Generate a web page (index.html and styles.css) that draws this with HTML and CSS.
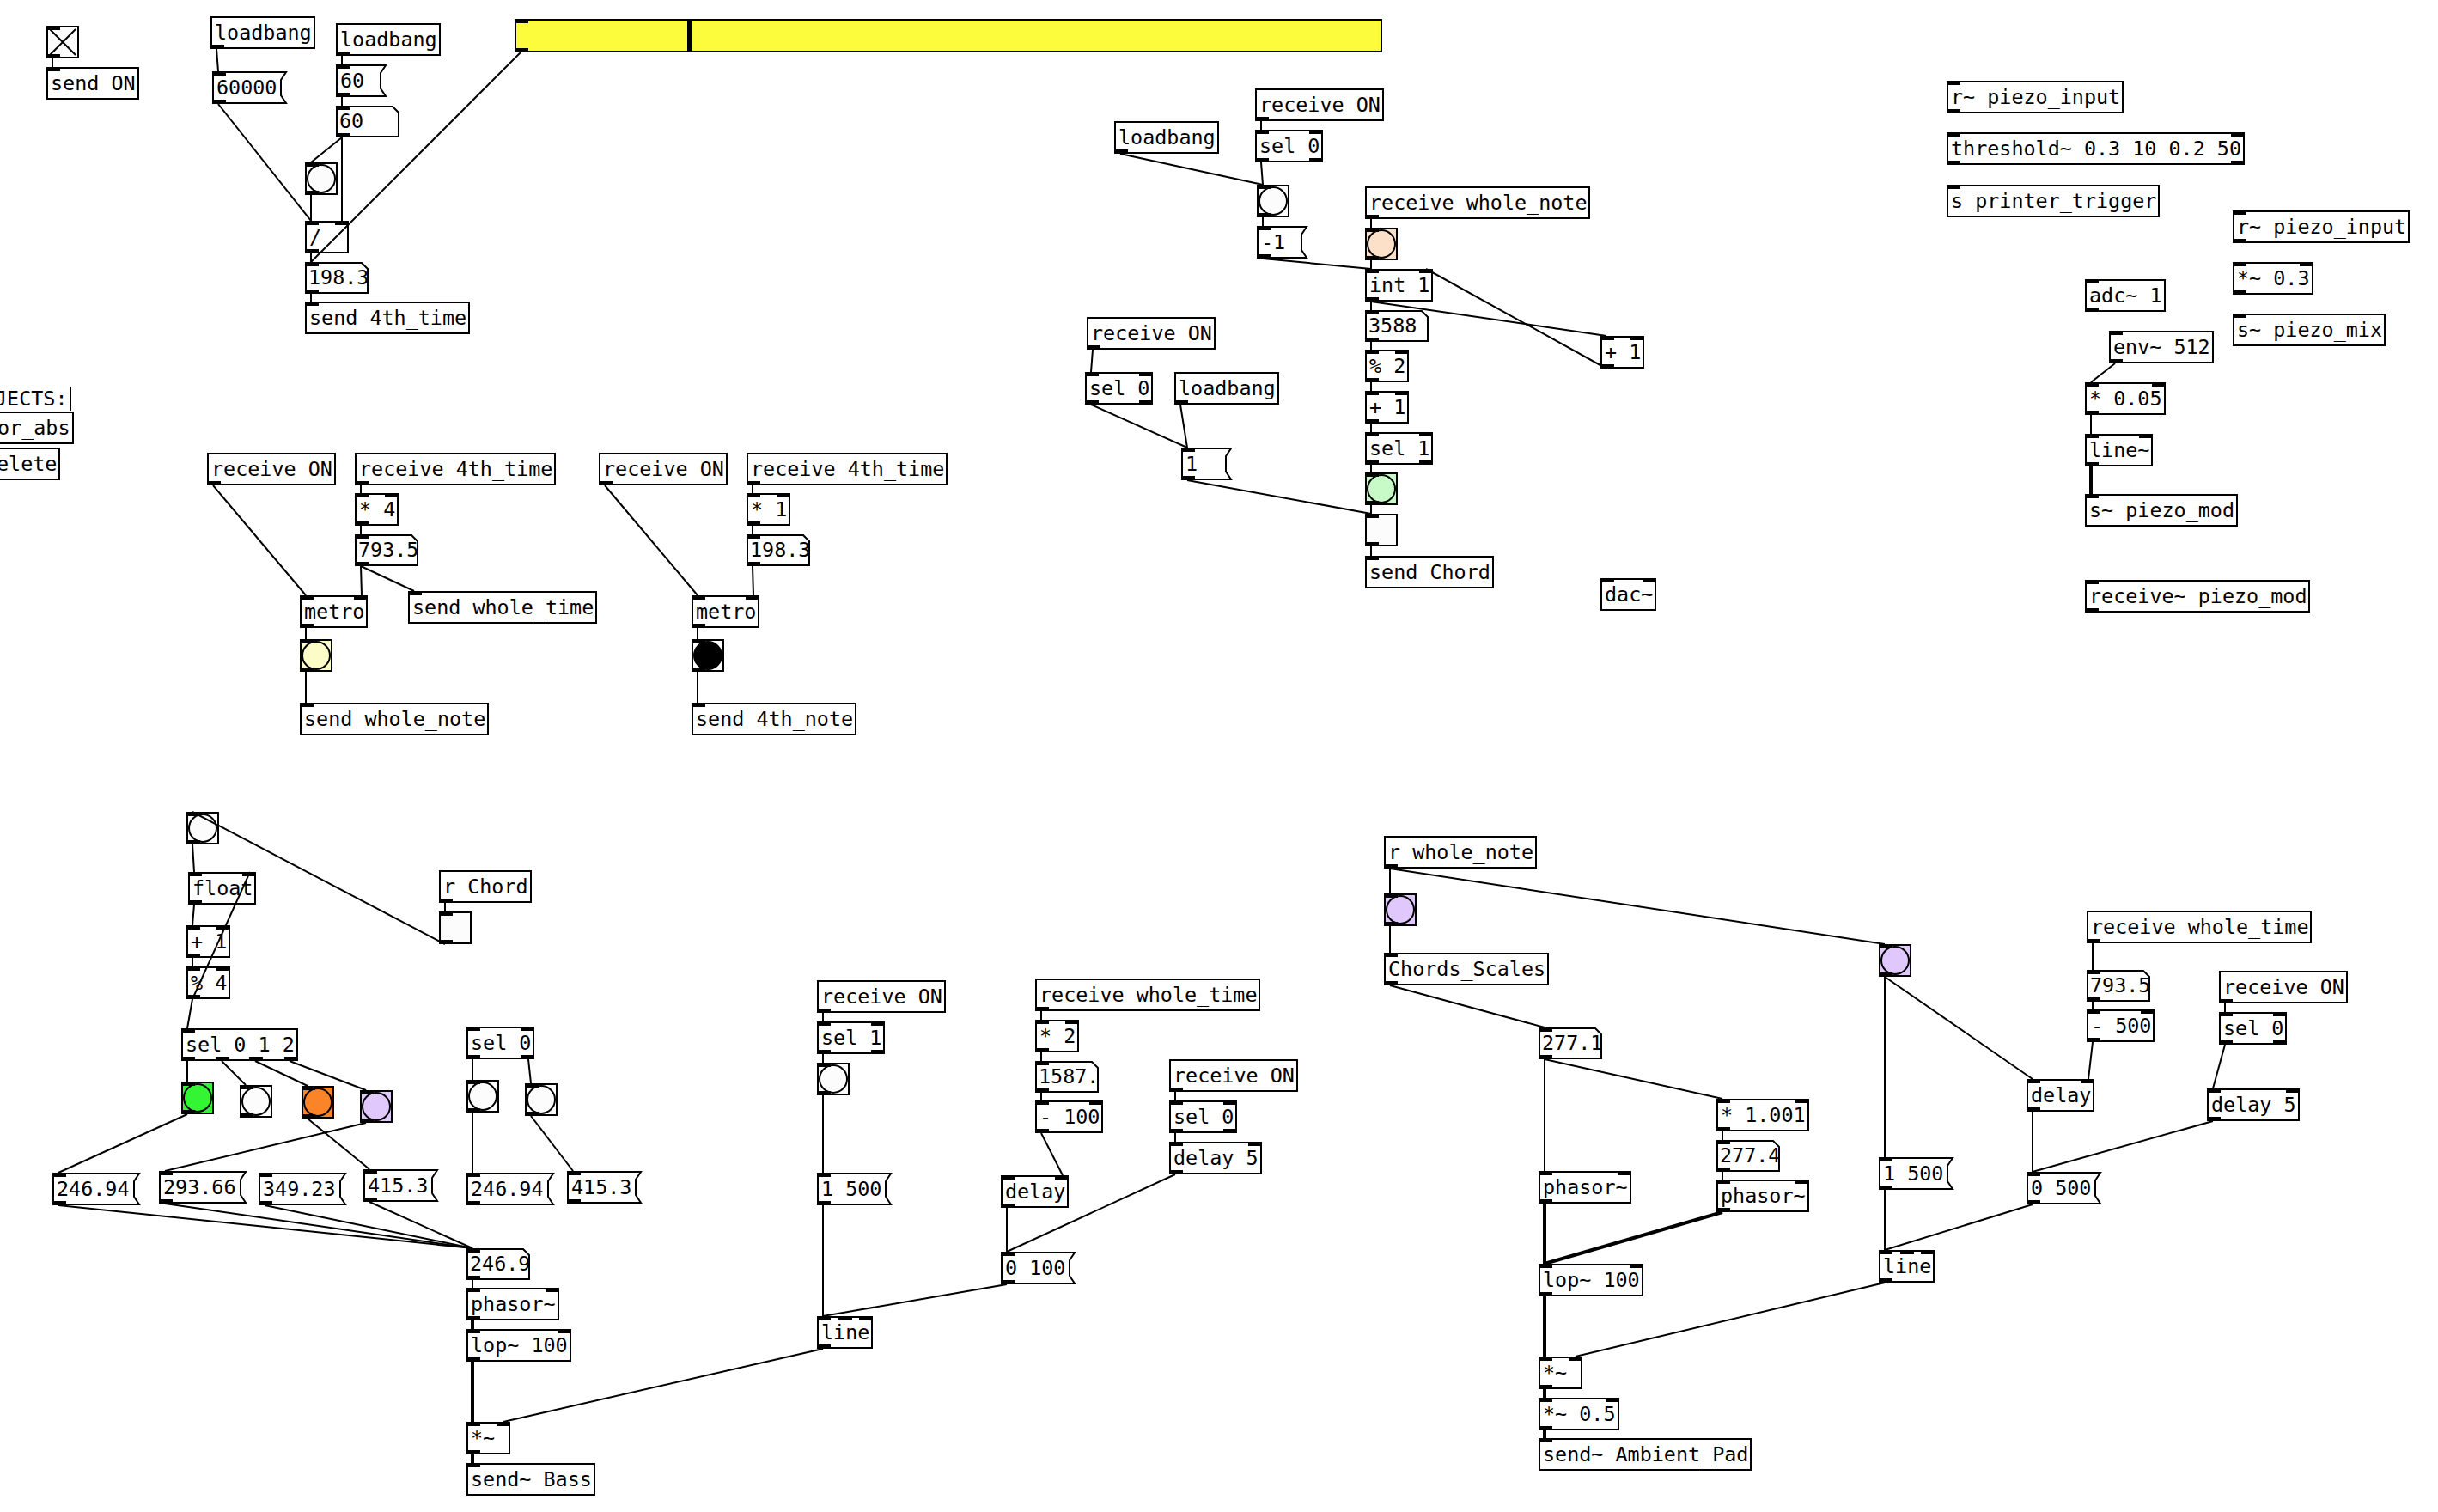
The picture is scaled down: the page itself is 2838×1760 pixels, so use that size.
FILE: index.html
```html
<!DOCTYPE html>
<html>
<head>
<meta charset="utf-8">
<title>Pd patch</title>
<link rel="stylesheet" href="styles.css">
</head>
<body>
<div class="canvas">

<!-- group A -->
<div class="t" style="left:54px;top:30px"><svg viewBox="0 0 34 34"><path d="M2 2L32 32M32 2L2 32"/></svg><i class="il"></i><i class="ol"></i></div>
<div class="o" style="left:54px;top:78px">send ON<i class="il"></i></div>
<div class="o" style="left:245px;top:19px">loadbang<i class="ol"></i></div>
<div class="o m" style="left:247px;top:83px">60000<svg class="f" viewBox="0 0 9 38"><polyline points="0,1 7,1 1,10 1,28 7,37 0,37"/></svg><i class="il"></i><i class="ol"></i></div>
<div class="o" style="left:391px;top:27px">loadbang<i class="ol"></i></div>
<div class="o m" style="left:391px;top:75px">60<svg class="f" viewBox="0 0 9 38"><polyline points="0,1 7,1 1,10 1,28 7,37 0,37"/></svg><i class="il"></i><i class="ol"></i></div>
<div class="n" style="left:391px;top:123px">60<svg viewBox="0 0 74 37"><polygon points="1,1 66,1 73,8 73,36 1,36"/></svg><i class="il"></i><i class="ol"></i></div>
<div class="b cw" style="left:355px;top:189px"><span class="c"></span><i class="il"></i><i class="ol"></i></div>
<div class="o" style="left:355px;top:257px">/<i class="il"></i><i class="ir"></i><i class="ol"></i></div>
<div class="n" style="left:355px;top:305px">198.3<svg viewBox="0 0 74 37"><polygon points="1,1 66,1 73,8 73,36 1,36"/></svg><i class="il"></i><i class="ol"></i></div>
<div class="o" style="left:355px;top:351px">send 4th_time<i class="il"></i></div>
<div class="hs" style="left:599px;top:22px;width:1010px"><span class="k" style="left:199px"></span><i class="il"></i><i class="ol"></i></div>

<div class="cm" style="left:-6px;top:450px">JECTS:</div>
<div class="o" style="left:-8px;top:479px">or_abs</div>
<div class="o" style="left:-9px;top:521px">elete</div>

<!-- group B -->
<div class="o" style="left:241px;top:527px">receive ON<i class="ol"></i></div>
<div class="o" style="left:413px;top:527px">receive 4th_time<i class="ol"></i></div>
<div class="o" style="left:413px;top:574px">* 4<i class="il"></i><i class="ir"></i><i class="ol"></i></div>
<div class="n" style="left:413px;top:622px">793.5<svg viewBox="0 0 74 37"><polygon points="1,1 66,1 73,8 73,36 1,36"/></svg><i class="il"></i><i class="ol"></i></div>
<div class="o" style="left:349px;top:693px">metro<i class="il"></i><i class="ir"></i><i class="ol"></i></div>
<div class="o" style="left:475px;top:688px">send whole_time<i class="il"></i></div>
<div class="b cy" style="left:349px;top:744px"><span class="c"></span><i class="il"></i><i class="ol"></i></div>
<div class="o" style="left:349px;top:818px">send whole_note<i class="il"></i></div>

<!-- group C -->
<div class="o" style="left:697px;top:527px">receive ON<i class="ol"></i></div>
<div class="o" style="left:869px;top:527px">receive 4th_time<i class="ol"></i></div>
<div class="o" style="left:869px;top:574px">* 1<i class="il"></i><i class="ir"></i><i class="ol"></i></div>
<div class="n" style="left:869px;top:622px">198.3<svg viewBox="0 0 74 37"><polygon points="1,1 66,1 73,8 73,36 1,36"/></svg><i class="il"></i><i class="ol"></i></div>
<div class="o" style="left:805px;top:693px">metro<i class="il"></i><i class="ir"></i><i class="ol"></i></div>
<div class="b cw" style="left:805px;top:744px"><span class="c on"></span><i class="il"></i><i class="ol"></i></div>
<div class="o" style="left:805px;top:818px">send 4th_note<i class="il"></i></div>

<!-- group D -->
<div class="o" style="left:1297px;top:141px">loadbang<i class="ol"></i></div>
<div class="o" style="left:1461px;top:103px">receive ON<i class="ol"></i></div>
<div class="o" style="left:1461px;top:151px">sel 0<i class="il"></i><i class="ir"></i><i class="ol"></i><i class="or"></i></div>
<div class="b cw" style="left:1463px;top:215px"><span class="c"></span><i class="il"></i><i class="ol"></i></div>
<div class="o m" style="left:1463px;top:263px">-1<svg class="f" viewBox="0 0 9 38"><polyline points="0,1 7,1 1,10 1,28 7,37 0,37"/></svg><i class="il"></i><i class="ol"></i></div>
<div class="o" style="left:1589px;top:217px">receive whole_note<i class="ol"></i></div>
<div class="b cp" style="left:1589px;top:265px"><span class="c"></span><i class="il"></i><i class="ol"></i></div>
<div class="o" style="left:1589px;top:313px">int 1<i class="il"></i><i class="ir"></i><i class="ol"></i></div>
<div class="n" style="left:1589px;top:361px">3588<svg viewBox="0 0 74 37"><polygon points="1,1 66,1 73,8 73,36 1,36"/></svg><i class="il"></i><i class="ol"></i></div>
<div class="o" style="left:1589px;top:407px">% 2<i class="il"></i><i class="ir"></i><i class="ol"></i></div>
<div class="o" style="left:1589px;top:455px">+ 1<i class="il"></i><i class="ir"></i><i class="ol"></i></div>
<div class="o" style="left:1589px;top:503px">sel 1<i class="il"></i><i class="ir"></i><i class="ol"></i><i class="or"></i></div>
<div class="b cg" style="left:1589px;top:550px"><span class="c"></span><i class="il"></i><i class="ol"></i></div>
<div class="t" style="left:1589px;top:598px"><i class="il"></i><i class="ol"></i></div>
<div class="o" style="left:1589px;top:647px">send Chord<i class="il"></i></div>
<div class="o" style="left:1863px;top:391px">+ 1<i class="il"></i><i class="ir"></i><i class="ol"></i></div>
<div class="o" style="left:1265px;top:369px">receive ON<i class="ol"></i></div>
<div class="o" style="left:1263px;top:433px">sel 0<i class="il"></i><i class="ir"></i><i class="ol"></i><i class="or"></i></div>
<div class="o" style="left:1367px;top:433px">loadbang<i class="ol"></i></div>
<div class="o m" style="left:1375px;top:521px">1<svg class="f" viewBox="0 0 9 38"><polyline points="0,1 7,1 1,10 1,28 7,37 0,37"/></svg><i class="il"></i><i class="ol"></i></div>
<div class="o" style="left:1863px;top:673px">dac~<i class="il"></i><i class="ir"></i></div>

<!-- group E -->
<div class="o" style="left:2266px;top:94px">r~ piezo_input<i class="il"></i><i class="ol"></i></div>
<div class="o" style="left:2266px;top:154px">threshold~ 0.3 10 0.2 50<i class="il"></i><i class="ir"></i><i class="ol"></i><i class="or"></i></div>
<div class="o" style="left:2266px;top:215px">s printer_trigger<i class="il"></i></div>
<div class="o" style="left:2599px;top:245px">r~ piezo_input<i class="il"></i><i class="ol"></i></div>
<div class="o" style="left:2599px;top:305px">*~ 0.3<i class="il"></i><i class="ir"></i><i class="ol"></i></div>
<div class="o" style="left:2599px;top:365px">s~ piezo_mix<i class="il"></i></div>
<div class="o" style="left:2427px;top:325px">adc~ 1<i class="il"></i><i class="ol"></i></div>
<div class="o" style="left:2455px;top:385px">env~ 512<i class="il"></i><i class="ol"></i></div>
<div class="o" style="left:2427px;top:445px">* 0.05<i class="il"></i><i class="ir"></i><i class="ol"></i></div>
<div class="o" style="left:2427px;top:505px">line~<i class="il"></i><i class="ir"></i><i class="ol"></i></div>
<div class="o" style="left:2427px;top:575px">s~ piezo_mod<i class="il"></i></div>
<div class="o" style="left:2427px;top:675px">receive~ piezo_mod<i class="il"></i><i class="ol"></i></div>

<!-- group F -->
<div class="b cw" style="left:217px;top:945px"><span class="c"></span><i class="il"></i><i class="ol"></i></div>
<div class="o" style="left:219px;top:1015px">float<i class="il"></i><i class="ir"></i><i class="ol"></i></div>
<div class="o" style="left:217px;top:1077px">+ 1<i class="il"></i><i class="ir"></i><i class="ol"></i></div>
<div class="o" style="left:217px;top:1125px">% 4<i class="il"></i><i class="ir"></i><i class="ol"></i></div>
<div class="o" style="left:211px;top:1197px">sel 0 1 2<i class="il"></i><i class="ol"></i><i class="om" style="left:38px"></i><i class="om" style="left:77px"></i><i class="or"></i></div>
<div class="o" style="left:511px;top:1013px">r Chord<i class="ol"></i></div>
<div class="t" style="left:511px;top:1061px"><i class="il"></i><i class="ol"></i></div>
<div class="b cG" style="left:211px;top:1259px"><span class="c"></span><i class="il"></i><i class="ol"></i></div>
<div class="b cw" style="left:279px;top:1263px"><span class="c"></span><i class="il"></i><i class="ol"></i></div>
<div class="b co" style="left:351px;top:1264px"><span class="c"></span><i class="il"></i><i class="ol"></i></div>
<div class="b cv" style="left:419px;top:1269px"><span class="c"></span><i class="il"></i><i class="ol"></i></div>
<div class="o" style="left:543px;top:1195px">sel 0<i class="il"></i><i class="ir"></i><i class="ol"></i><i class="or"></i></div>
<div class="b cw" style="left:543px;top:1257px"><span class="c"></span><i class="il"></i><i class="ol"></i></div>
<div class="b cw" style="left:611px;top:1261px"><span class="c"></span><i class="il"></i><i class="ol"></i></div>
<div class="o m" style="left:61px;top:1365px">246.94<svg class="f" viewBox="0 0 9 38"><polyline points="0,1 7,1 1,10 1,28 7,37 0,37"/></svg><i class="il"></i><i class="ol"></i></div>
<div class="o m" style="left:185px;top:1363px">293.66<svg class="f" viewBox="0 0 9 38"><polyline points="0,1 7,1 1,10 1,28 7,37 0,37"/></svg><i class="il"></i><i class="ol"></i></div>
<div class="o m" style="left:301px;top:1365px">349.23<svg class="f" viewBox="0 0 9 38"><polyline points="0,1 7,1 1,10 1,28 7,37 0,37"/></svg><i class="il"></i><i class="ol"></i></div>
<div class="o m" style="left:423px;top:1361px">415.3<svg class="f" viewBox="0 0 9 38"><polyline points="0,1 7,1 1,10 1,28 7,37 0,37"/></svg><i class="il"></i><i class="ol"></i></div>
<div class="o m" style="left:543px;top:1365px">246.94<svg class="f" viewBox="0 0 9 38"><polyline points="0,1 7,1 1,10 1,28 7,37 0,37"/></svg><i class="il"></i><i class="ol"></i></div>
<div class="o m" style="left:660px;top:1363px">415.3<svg class="f" viewBox="0 0 9 38"><polyline points="0,1 7,1 1,10 1,28 7,37 0,37"/></svg><i class="il"></i><i class="ol"></i></div>
<div class="n" style="left:543px;top:1453px">246.9<svg viewBox="0 0 74 37"><polygon points="1,1 66,1 73,8 73,36 1,36"/></svg><i class="il"></i><i class="ol"></i></div>
<div class="o" style="left:543px;top:1499px">phasor~<i class="il"></i><i class="ir"></i><i class="ol"></i></div>
<div class="o" style="left:543px;top:1547px">lop~ 100<i class="il"></i><i class="ir"></i><i class="ol"></i></div>
<div class="o" style="left:543px;top:1655px">*~<i class="il"></i><i class="ir"></i><i class="ol"></i></div>
<div class="o" style="left:543px;top:1703px">send~ Bass<i class="il"></i></div>

<!-- group G -->
<div class="o" style="left:951px;top:1141px">receive ON<i class="ol"></i></div>
<div class="o" style="left:951px;top:1189px">sel 1<i class="il"></i><i class="ir"></i><i class="ol"></i><i class="or"></i></div>
<div class="b cw" style="left:951px;top:1237px"><span class="c"></span><i class="il"></i><i class="ol"></i></div>
<div class="o m" style="left:951px;top:1365px">1 500<svg class="f" viewBox="0 0 9 38"><polyline points="0,1 7,1 1,10 1,28 7,37 0,37"/></svg><i class="il"></i><i class="ol"></i></div>
<div class="o" style="left:951px;top:1532px">line<i class="il"></i><i class="im" style="left:23px"></i><i class="ir"></i><i class="ol"></i></div>
<div class="o" style="left:1205px;top:1139px">receive whole_time<i class="ol"></i></div>
<div class="o" style="left:1205px;top:1187px">* 2<i class="il"></i><i class="ir"></i><i class="ol"></i></div>
<div class="n" style="left:1205px;top:1235px">1587.<svg viewBox="0 0 74 37"><polygon points="1,1 66,1 73,8 73,36 1,36"/></svg><i class="il"></i><i class="ol"></i></div>
<div class="o" style="left:1205px;top:1281px">- 100<i class="il"></i><i class="ir"></i><i class="ol"></i></div>
<div class="o" style="left:1165px;top:1368px">delay<i class="il"></i><i class="ir"></i><i class="ol"></i></div>
<div class="o m" style="left:1165px;top:1457px">0 100<svg class="f" viewBox="0 0 9 38"><polyline points="0,1 7,1 1,10 1,28 7,37 0,37"/></svg><i class="il"></i><i class="ol"></i></div>
<div class="o" style="left:1361px;top:1233px">receive ON<i class="ol"></i></div>
<div class="o" style="left:1361px;top:1281px">sel 0<i class="il"></i><i class="ir"></i><i class="ol"></i><i class="or"></i></div>
<div class="o" style="left:1361px;top:1329px">delay 5<i class="il"></i><i class="ir"></i><i class="ol"></i></div>

<!-- group H -->
<div class="o" style="left:1611px;top:973px">r whole_note<i class="ol"></i></div>
<div class="b cv" style="left:1611px;top:1040px"><span class="c"></span><i class="il"></i><i class="ol"></i></div>
<div class="o" style="left:1611px;top:1109px">Chords_Scales<i class="il"></i><i class="ol"></i></div>
<div class="n" style="left:1791px;top:1196px">277.1<svg viewBox="0 0 74 37"><polygon points="1,1 66,1 73,8 73,36 1,36"/></svg><i class="il"></i><i class="ol"></i></div>
<div class="o" style="left:1998px;top:1279px">* 1.001<i class="il"></i><i class="ir"></i><i class="ol"></i></div>
<div class="n" style="left:1998px;top:1327px">277.4<svg viewBox="0 0 74 37"><polygon points="1,1 66,1 73,8 73,36 1,36"/></svg><i class="il"></i><i class="ol"></i></div>
<div class="o" style="left:1998px;top:1373px">phasor~<i class="il"></i><i class="ir"></i><i class="ol"></i></div>
<div class="o" style="left:1791px;top:1363px">phasor~<i class="il"></i><i class="ir"></i><i class="ol"></i></div>
<div class="o" style="left:1791px;top:1471px">lop~ 100<i class="il"></i><i class="ir"></i><i class="ol"></i></div>
<div class="o" style="left:1791px;top:1579px">*~<i class="il"></i><i class="ir"></i><i class="ol"></i></div>
<div class="o" style="left:1791px;top:1627px">*~ 0.5<i class="il"></i><i class="ir"></i><i class="ol"></i></div>
<div class="o" style="left:1791px;top:1674px">send~ Ambient_Pad<i class="il"></i></div>
<div class="b cv" style="left:2187px;top:1099px"><span class="c"></span><i class="il"></i><i class="ol"></i></div>
<div class="o m" style="left:2187px;top:1347px">1 500<svg class="f" viewBox="0 0 9 38"><polyline points="0,1 7,1 1,10 1,28 7,37 0,37"/></svg><i class="il"></i><i class="ol"></i></div>
<div class="o" style="left:2187px;top:1455px">line<i class="il"></i><i class="im" style="left:23px"></i><i class="ir"></i><i class="ol"></i></div>
<div class="o" style="left:2429px;top:1060px">receive whole_time<i class="ol"></i></div>
<div class="n" style="left:2429px;top:1129px">793.5<svg viewBox="0 0 74 37"><polygon points="1,1 66,1 73,8 73,36 1,36"/></svg><i class="il"></i><i class="ol"></i></div>
<div class="o" style="left:2429px;top:1175px">- 500<i class="il"></i><i class="ir"></i><i class="ol"></i></div>
<div class="o" style="left:2359px;top:1256px">delay<i class="il"></i><i class="ir"></i><i class="ol"></i></div>
<div class="o m" style="left:2359px;top:1364px">0 500<svg class="f" viewBox="0 0 9 38"><polyline points="0,1 7,1 1,10 1,28 7,37 0,37"/></svg><i class="il"></i><i class="ol"></i></div>
<div class="o" style="left:2583px;top:1130px">receive ON<i class="ol"></i></div>
<div class="o" style="left:2583px;top:1178px">sel 0<i class="il"></i><i class="ir"></i><i class="ol"></i><i class="or"></i></div>
<div class="o" style="left:2569px;top:1267px">delay 5<i class="il"></i><i class="ir"></i><i class="ol"></i></div>

<svg class="wires" viewBox="0 0 2838 1760">
<!-- A -->
<line x1="61" y1="68" x2="61" y2="78"/>
<line x1="252" y1="57" x2="254" y2="83"/>
<line x1="254" y1="121" x2="362" y2="257"/>
<line x1="398" y1="65" x2="398" y2="75"/>
<line x1="398" y1="113" x2="398" y2="123"/>
<line x1="398" y1="160" x2="362" y2="189"/>
<line x1="398" y1="160" x2="398" y2="257"/>
<line x1="362" y1="227" x2="362" y2="257"/>
<line x1="362" y1="295" x2="362" y2="305"/>
<line x1="606" y1="61" x2="362" y2="305"/>
<line x1="362" y1="342" x2="362" y2="351"/>
<!-- B -->
<line x1="248" y1="565" x2="356" y2="693"/>
<line x1="420" y1="565" x2="420" y2="574"/>
<line x1="420" y1="612" x2="420" y2="622"/>
<line x1="420" y1="659" x2="421" y2="693"/>
<line x1="420" y1="659" x2="482" y2="688"/>
<line x1="356" y1="731" x2="356" y2="744"/>
<line x1="356" y1="782" x2="356" y2="818"/>
<!-- C -->
<line x1="704" y1="565" x2="812" y2="693"/>
<line x1="876" y1="565" x2="876" y2="574"/>
<line x1="876" y1="612" x2="876" y2="622"/>
<line x1="876" y1="659" x2="877" y2="693"/>
<line x1="812" y1="731" x2="812" y2="744"/>
<line x1="812" y1="782" x2="812" y2="818"/>
<!-- D -->
<line x1="1304" y1="179" x2="1470" y2="215"/>
<line x1="1468" y1="141" x2="1468" y2="151"/>
<line x1="1468" y1="189" x2="1470" y2="215"/>
<line x1="1470" y1="253" x2="1470" y2="263"/>
<line x1="1470" y1="301" x2="1596" y2="313"/>
<line x1="1596" y1="255" x2="1596" y2="265"/>
<line x1="1596" y1="303" x2="1596" y2="313"/>
<line x1="1596" y1="351" x2="1596" y2="361"/>
<line x1="1596" y1="351" x2="1870" y2="391"/>
<line x1="1870" y1="429" x2="1660" y2="313"/>
<line x1="1596" y1="398" x2="1596" y2="407"/>
<line x1="1596" y1="445" x2="1596" y2="455"/>
<line x1="1596" y1="493" x2="1596" y2="503"/>
<line x1="1596" y1="541" x2="1596" y2="550"/>
<line x1="1596" y1="588" x2="1596" y2="598"/>
<line x1="1596" y1="636" x2="1596" y2="647"/>
<line x1="1272" y1="407" x2="1270" y2="433"/>
<line x1="1270" y1="471" x2="1382" y2="521"/>
<line x1="1374" y1="471" x2="1382" y2="521"/>
<line x1="1382" y1="559" x2="1596" y2="598"/>
<!-- E -->
<line x1="2462" y1="423" x2="2434" y2="445"/>
<line x1="2434" y1="483" x2="2434" y2="505"/>
<line class="s" x1="2434" y1="543" x2="2434" y2="575"/>
<!-- F -->
<line x1="224" y1="983" x2="226" y2="1015"/>
<line x1="518" y1="1099" x2="224" y2="945"/>
<line x1="518" y1="1051" x2="518" y2="1061"/>
<line x1="226" y1="1053" x2="224" y2="1077"/>
<line x1="224" y1="1115" x2="224" y2="1125"/>
<line x1="224" y1="1163" x2="291" y2="1015"/>
<line x1="224" y1="1163" x2="218" y2="1197"/>
<line x1="218" y1="1235" x2="218" y2="1259"/>
<line x1="258" y1="1235" x2="286" y2="1263"/>
<line x1="297" y1="1235" x2="358" y2="1264"/>
<line x1="337" y1="1235" x2="426" y2="1269"/>
<line x1="218" y1="1297" x2="68" y2="1365"/>
<line x1="426" y1="1307" x2="192" y2="1363"/>
<line x1="358" y1="1302" x2="430" y2="1361"/>
<line x1="550" y1="1233" x2="550" y2="1257"/>
<line x1="615" y1="1233" x2="618" y2="1261"/>
<line x1="550" y1="1295" x2="550" y2="1365"/>
<line x1="618" y1="1299" x2="667" y2="1363"/>
<line x1="68" y1="1403" x2="550" y2="1453"/>
<line x1="192" y1="1401" x2="550" y2="1453"/>
<line x1="308" y1="1403" x2="550" y2="1453"/>
<line x1="430" y1="1399" x2="550" y2="1453"/>
<line x1="550" y1="1490" x2="550" y2="1499"/>
<line class="s" x1="550" y1="1537" x2="550" y2="1547"/>
<line class="s" x1="550" y1="1585" x2="550" y2="1655"/>
<line class="s" x1="550" y1="1693" x2="550" y2="1703"/>
<line x1="958" y1="1570" x2="586" y2="1655"/>
<!-- G -->
<line x1="958" y1="1179" x2="958" y2="1189"/>
<line x1="958" y1="1227" x2="958" y2="1237"/>
<line x1="958" y1="1275" x2="958" y2="1365"/>
<line x1="958" y1="1403" x2="958" y2="1532"/>
<line x1="1172" y1="1495" x2="958" y2="1532"/>
<line x1="1212" y1="1177" x2="1212" y2="1187"/>
<line x1="1212" y1="1225" x2="1212" y2="1235"/>
<line x1="1212" y1="1272" x2="1212" y2="1281"/>
<line x1="1212" y1="1319" x2="1237" y2="1368"/>
<line x1="1172" y1="1406" x2="1172" y2="1457"/>
<line x1="1368" y1="1271" x2="1368" y2="1281"/>
<line x1="1368" y1="1319" x2="1368" y2="1329"/>
<line x1="1368" y1="1367" x2="1172" y2="1457"/>
<!-- H -->
<line x1="1618" y1="1011" x2="1618" y2="1040"/>
<line x1="1618" y1="1011" x2="2194" y2="1099"/>
<line x1="1618" y1="1078" x2="1618" y2="1109"/>
<line x1="1618" y1="1147" x2="1798" y2="1196"/>
<line x1="1798" y1="1233" x2="1798" y2="1363"/>
<line x1="1798" y1="1233" x2="2005" y2="1279"/>
<line x1="2005" y1="1317" x2="2005" y2="1327"/>
<line x1="2005" y1="1364" x2="2005" y2="1373"/>
<line class="s" x1="2005" y1="1411" x2="1798" y2="1471"/>
<line class="s" x1="1798" y1="1401" x2="1798" y2="1471"/>
<line class="s" x1="1798" y1="1509" x2="1798" y2="1579"/>
<line class="s" x1="1798" y1="1617" x2="1798" y2="1627"/>
<line class="s" x1="1798" y1="1665" x2="1798" y2="1674"/>
<line x1="2194" y1="1493" x2="1834" y2="1579"/>
<line x1="2194" y1="1137" x2="2194" y2="1347"/>
<line x1="2194" y1="1137" x2="2366" y2="1256"/>
<line x1="2194" y1="1385" x2="2194" y2="1455"/>
<line x1="2366" y1="1402" x2="2194" y2="1455"/>
<line x1="2436" y1="1098" x2="2436" y2="1129"/>
<line x1="2436" y1="1166" x2="2436" y2="1175"/>
<line x1="2436" y1="1213" x2="2431" y2="1256"/>
<line x1="2366" y1="1294" x2="2366" y2="1364"/>
<line x1="2590" y1="1168" x2="2590" y2="1178"/>
<line x1="2590" y1="1216" x2="2576" y2="1267"/>
<line x1="2576" y1="1305" x2="2366" y2="1364"/>
</svg>
</div>
</body>
</html>
```

FILE: styles.css
```css
html, body {
  margin: 0;
  padding: 0;
  background: #fff;
}

.canvas {
  position: relative;
  width: 2838px;
  height: 1760px;
  overflow: hidden;
  background: #fff;
  color: #000;
  font-family: "DejaVu Sans Mono", "Liberation Mono", monospace;
  font-size: 23.4px;
}

/* object box */
.o {
  position: absolute;
  box-sizing: border-box;
  height: 38px;
  min-width: calc(3ch + 9px);
  border: 2px solid #000;
  padding: 0 2px 0 3px;
  line-height: 34px;
  white-space: pre;
  background: #fff;
}

/* message box: right side replaced by flag */
.m {
  border-right: 0;
  padding-right: 4px;
}

.m .f {
  position: absolute;
  left: 100%;
  top: -2px;
  width: 9px;
  height: 38px;
  overflow: visible;
}

.f polyline {
  fill: #fff;
  stroke: #000;
  stroke-width: 2;
}

/* number (atom) box */
.n {
  position: absolute;
  z-index: 0;
  box-sizing: border-box;
  width: 74px;
  height: 37px;
  padding-left: 4px;
  line-height: 37px;
  white-space: pre;
}

.n svg {
  position: absolute;
  left: 0;
  top: 0;
  width: 74px;
  height: 37px;
  z-index: -1;
}

.n polygon {
  fill: #fff;
  stroke: #000;
  stroke-width: 2;
}

.n .il { left: 0; top: 0; }
.n .ol { left: 0; bottom: 0; }

/* bang and toggle */
.b, .t {
  position: absolute;
  box-sizing: border-box;
  width: 38px;
  height: 38px;
  border: 2px solid #000;
  background: #fcfcfc;
}

.b .c {
  position: absolute;
  inset: 0;
  box-sizing: border-box;
  border: 2px solid #000;
  border-radius: 50%;
}

.b .c.on {
  background: #000;
}

.t svg {
  position: absolute;
  left: 0;
  top: 0;
  width: 34px;
  height: 34px;
}

.t path {
  stroke: #000;
  stroke-width: 2;
  fill: none;
}

.cw { background: #fcfcfc; }
.cy { background: #fcfcc8; }
.cp { background: #fce0c8; }
.cg { background: #c8fac8; }
.cG { background: #34f534; }
.co { background: #fc8428; }
.cv { background: #e0c8fc; }

/* horizontal slider */
.hs {
  position: absolute;
  box-sizing: border-box;
  height: 39px;
  border: 2px solid #000;
  background: #fcfc3c;
}

.hs .k {
  position: absolute;
  top: 0;
  bottom: 0;
  width: 6px;
  background: #000;
}

/* comment with edit bar */
.cm {
  position: absolute;
  height: 28px;
  line-height: 28px;
  padding-right: 2px;
  border-right: 2px solid #000;
  white-space: pre;
}

/* inlets / outlets */
i {
  position: absolute;
  width: 16px;
  height: 5px;
  background: #000;
}

.il { left: -2px; top: -2px; }
.ir { right: -2px; top: -2px; }
.ol { left: -2px; bottom: -2px; }
.or { right: -2px; bottom: -2px; }
.im { top: -2px; }
.om { bottom: -2px; }

/* connections */
.wires {
  position: absolute;
  left: 0;
  top: 0;
  width: 2838px;
  height: 1760px;
  z-index: 5;
  pointer-events: none;
}

.wires line {
  stroke: #000;
  stroke-width: 2;
}

.wires line.s {
  stroke-width: 4;
}
```
